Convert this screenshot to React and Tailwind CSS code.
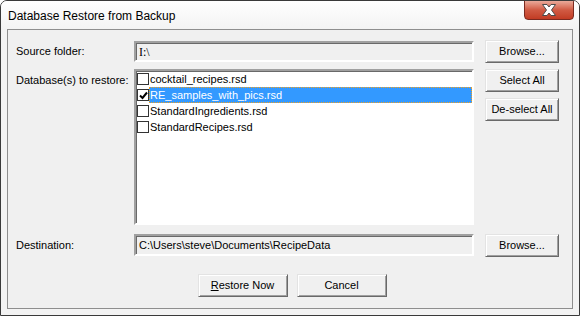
import { useState } from "react";

const FILES = [
  { name: "cocktail_recipes.rsd", checked: false },
  { name: "RE_samples_with_pics.rsd", checked: true },
  { name: "StandardIngredients.rsd", checked: false },
  { name: "StandardRecipes.rsd", checked: false },
];

const btn =
  "h-[23px] bg-[#f0f0f0] border border-t-[#e3e3e3] border-l-[#e3e3e3] border-r-[#696969] border-b-[#696969] shadow-[inset_1px_1px_0_#ffffff,inset_-1px_-1px_0_#a0a0a0] text-[11px] text-black flex items-center justify-center";

const sunken =
  "border-2 border-t-[#a0a0a0] border-l-[#a0a0a0] border-r-white border-b-white shadow-[inset_1px_1px_0_#696969]";

function CheckBox({ checked }) {
  return (
    <div className="w-[12px] h-[12px] bg-white border border-[#333] flex items-center justify-center shrink-0">
      {checked && (
        <svg width="9" height="9" viewBox="0 0 9 9">
          <path d="M1 4.5 L3.5 7 L8 1.5" stroke="#000" strokeWidth="2" fill="none" />
        </svg>
      )}
    </div>
  );
}

function App() {
  const [files, setFiles] = useState(FILES);
  const selected = 1;

  const toggle = (i) => {
    setFiles(files.map((f, j) => (j === i ? { ...f, checked: !f.checked } : f)));
  };

  return (
    <div
      className="w-[580px] h-[316px] bg-[#f3f3f3] border border-[#3a3a3a] rounded-t-[7px] flex flex-col overflow-hidden text-black"
      style={{ fontFamily: '"Liberation Sans", Arial, sans-serif' }}
    >
      {/* title bar */}
      <div className="h-[28px] flex items-start bg-gradient-to-b from-white to-[#f3f3f3] relative">
        <div className="pl-[7px] pt-[6px] text-[12px]">Database Restore from Backup</div>
        <div className="absolute right-[5px] top-[-1px] w-[50px] h-[20px] rounded-b-[4px] border border-[#7a2a20] bg-gradient-to-b from-[#e9a99a] via-[#d05a43] to-[#c23b23] flex items-center justify-center">
          <svg width="16" height="12" viewBox="0 0 16 12">
            <path
              d="M1.5 0.5 L6 0.5 L8 3 L10 0.5 L14.5 0.5 L10.5 6 L14.5 11.5 L10 11.5 L8 9 L6 11.5 L1.5 11.5 L5.5 6 Z"
              fill="#ffffff"
              stroke="#4a4a4a"
              strokeWidth="1"
            />
          </svg>
        </div>
      </div>

      {/* client area */}
      <div className="mx-[6px] h-[280px] border border-[#8e8e8e] bg-[#f0f0f0] flex flex-col text-[11px]">
        <div className="flex items-center mt-[10px] h-[23px]">
          <div className="w-[126px] pl-[8px]">Source folder:</div>
          <div className={`w-[340px] h-[21px] bg-[#f0f0f0] ${sunken} flex items-center pl-[3px]`}>
            <span style={{ fontFamily: '"Liberation Serif", serif' }} className="text-[12px]">
              I:\
            </span>
          </div>
          <button className={`${btn} w-[74px] ml-[11px]`}>Browse...</button>
        </div>

        <div className="flex mt-[6px]">
          <div className="w-[126px] pl-[8px] pt-[3px]">Database(s) to restore:</div>
          <div className={`w-[340px] h-[156px] bg-white ${sunken}`}>
            {files.map((f, i) => (
              <div key={f.name} className="h-[16px] flex items-center pl-[1px]" onClick={() => toggle(i)}>
                <CheckBox checked={f.checked} />
                <div
                  className={
                    i === selected
                      ? "flex-1 h-[16px] bg-[#3399ff] text-white border border-dotted border-[#f0a020] flex items-center"
                      : "ml-[1px] flex-1 flex items-center"
                  }
                >
                  {f.name}
                </div>
              </div>
            ))}
          </div>
          <div className="flex flex-col gap-[6px] ml-[11px]">
            <button className={`${btn} w-[74px]`}>Select All</button>
            <button className={`${btn} w-[74px]`}>De-select All</button>
          </div>
        </div>

        <div className="flex items-center mt-[8px] h-[24px]">
          <div className="w-[126px] pl-[8px]">Destination:</div>
          <div className={`w-[340px] h-[22px] bg-[#f0f0f0] ${sunken} flex items-center pl-[3px]`}>
            C:\Users\steve\Documents\RecipeData
          </div>
          <button className={`${btn} w-[74px] ml-[11px]`}>Browse...</button>
        </div>

        <div className="flex justify-center gap-[9px] mt-[17px] pl-[4px]">
          <button className={`${btn} w-[90px]`}>
            <span>
              <u>R</u>estore Now
            </span>
          </button>
          <button className={`${btn} w-[90px]`}>Cancel</button>
        </div>
      </div>
    </div>
  );
}

export default App;
